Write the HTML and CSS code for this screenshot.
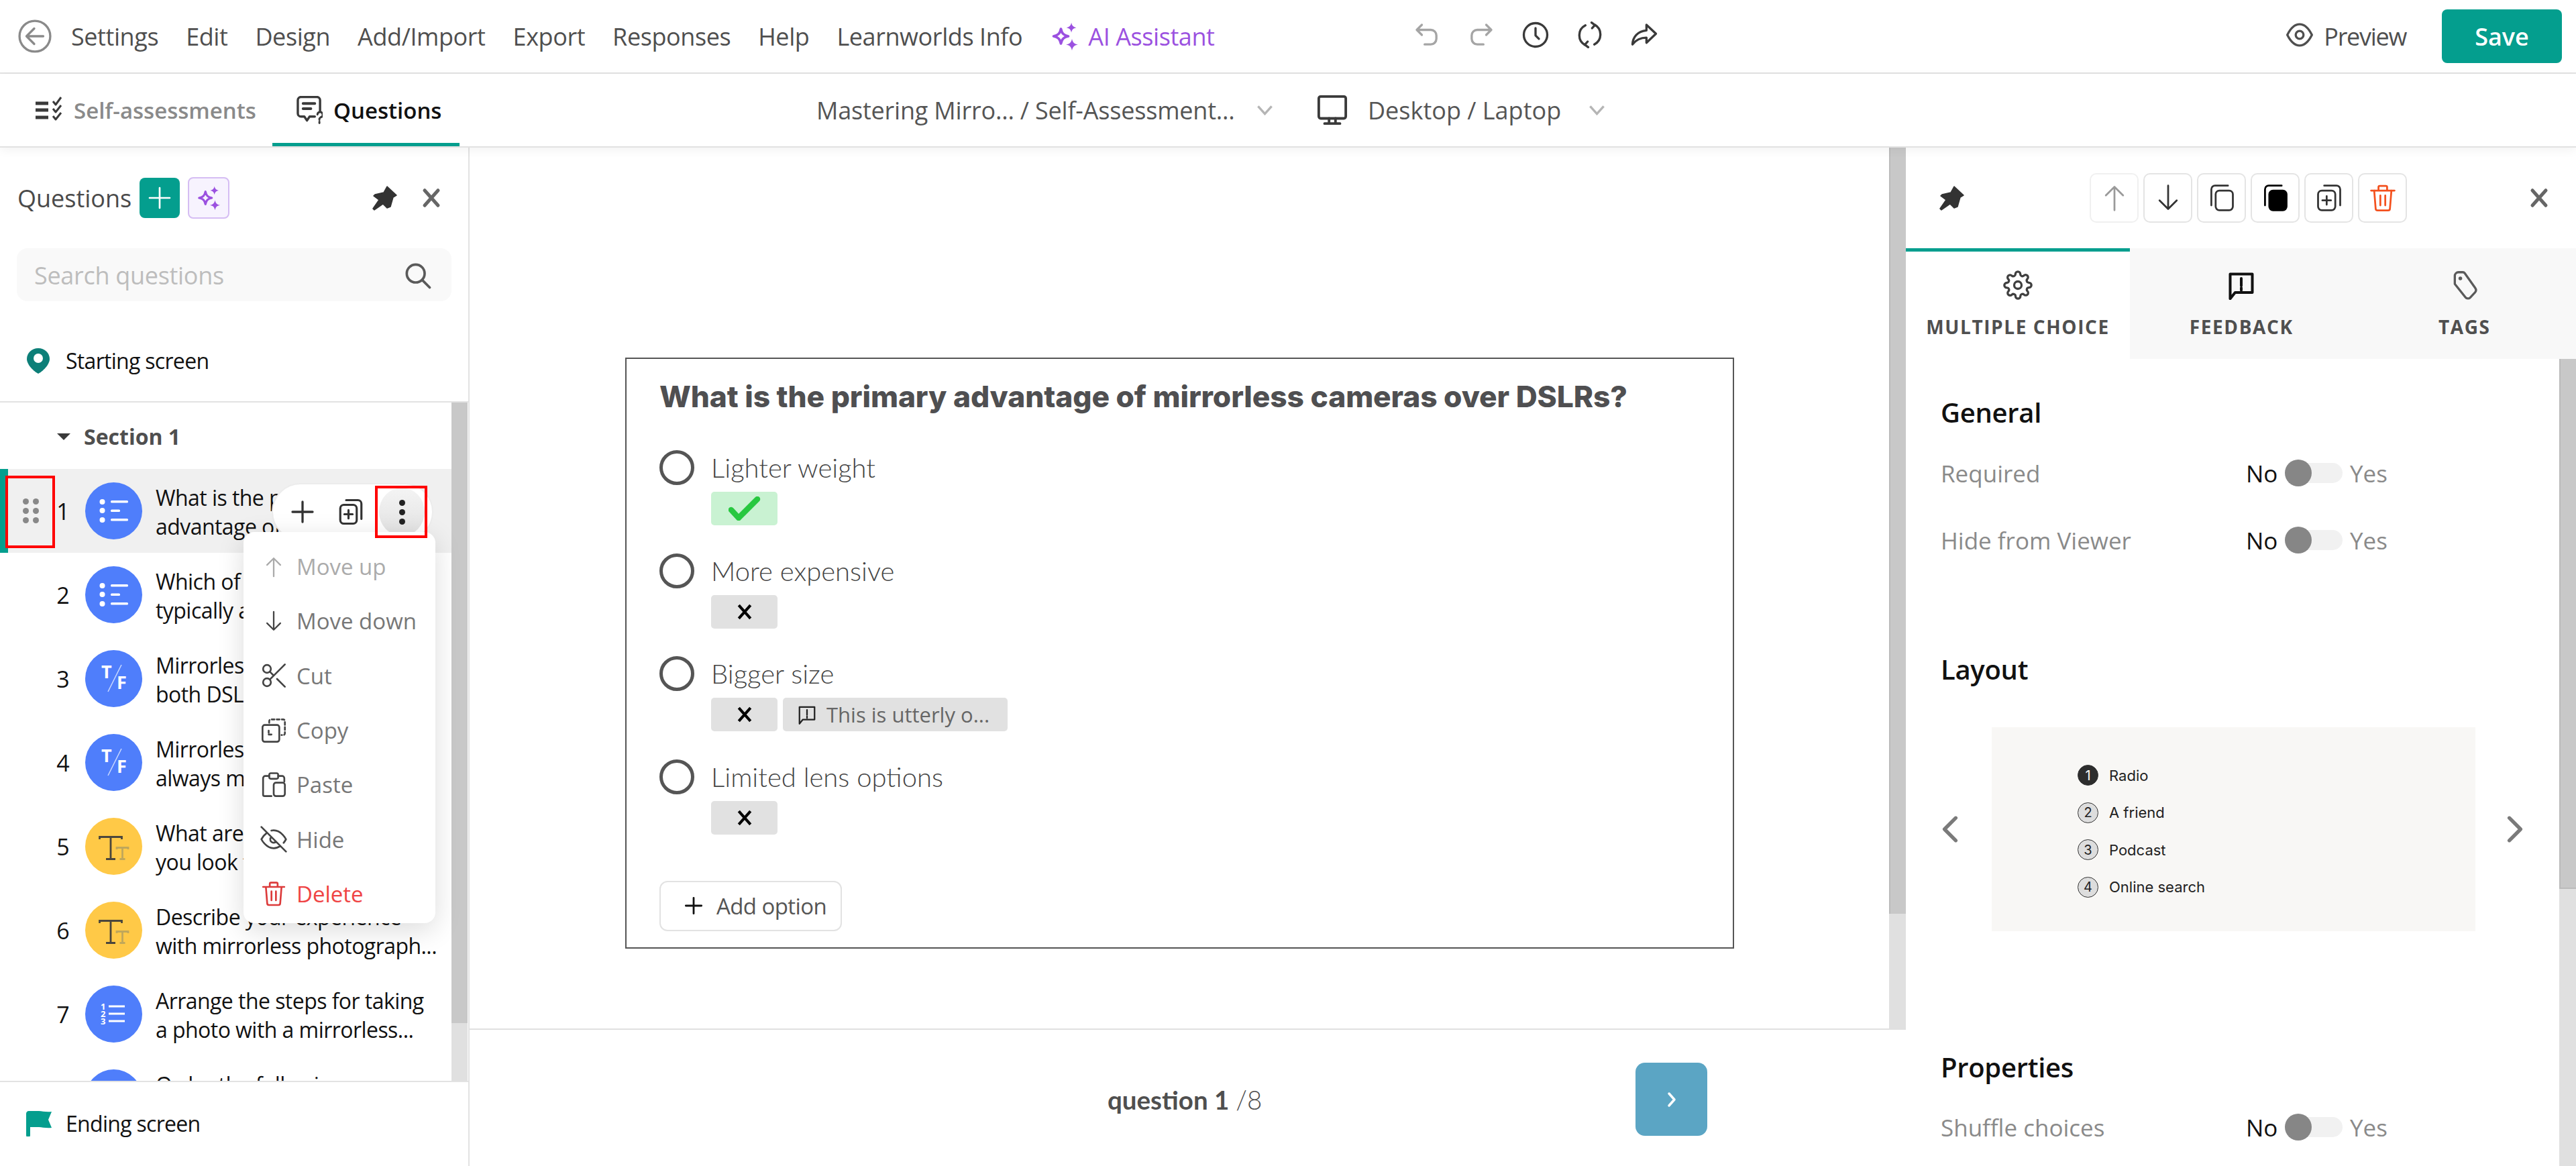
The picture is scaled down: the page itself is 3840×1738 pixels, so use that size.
FILE: index.html
```html
<!DOCTYPE html>
<html lang="en">
<head>
<meta charset="utf-8">
<title>Questions editor</title>
<link rel="stylesheet" href="styles.css">
</head>
<body>
<svg class="sprite" aria-hidden="true">
  <defs>
    <symbol id="i-up" viewBox="0 0 24 24"><path d="M12 22V3M5 10l7-7 7 7"/></symbol>
    <symbol id="i-down" viewBox="0 0 24 24"><path d="M12 2v19M5 14l7 7 7-7"/></symbol>
    <symbol id="i-copy" viewBox="0 0 24 24"><rect x="7" y="6" width="14" height="16" rx="3"/><path d="M3.5 18V5a3 3 0 0 1 3-3H17"/></symbol>
    <symbol id="i-copyfill" viewBox="0 0 24 24"><rect x="7" y="6" width="14" height="16" rx="3" fill="currentColor"/><path d="M3.5 18V5a3 3 0 0 1 3-3H17"/></symbol>
    <symbol id="i-dup" viewBox="0 0 24 24"><rect x="3" y="6" width="14" height="16" rx="3"/><path d="M8 2h10a3 3 0 0 1 3 3v13M10 10.5v7M6.5 14h7"/></symbol>
    <symbol id="i-trash" viewBox="0 0 24 24"><path d="M2.5 6h19M8.5 6V3.2a1 1 0 0 1 1-1h5a1 1 0 0 1 1 1V6M5 6l1.2 14.8a1.5 1.5 0 0 0 1.5 1.4h8.6a1.5 1.5 0 0 0 1.5-1.4L19 6M10 10v8M14 10v8"/></symbol>
    <symbol id="i-pin" viewBox="0 0 38 37"><path fill="currentColor" stroke="currentColor" stroke-width="1.5" stroke-linejoin="round" d="M23 1L37 14L32 17L28 31L23 33L17 27L4 36L2 34L11 21L3 15L5 13L18 10z"/></symbol>
    <symbol id="i-x" viewBox="0 0 24 24"><path d="M4 3l16 18M20 3L4 21"/></symbol>
    <symbol id="i-plus" viewBox="0 0 24 24"><path d="M12 2v20M2 12h20"/></symbol>
    <symbol id="i-spark" viewBox="0 0 24 24"><path d="M9 6c.8 3.8 2.2 5.2 6 6-3.800.8-5.200 2.200-6 6-.8-3.800-2.200-5.200-6-6 3.800-.8 5.200-2.200 6-6z" fill="none"/><path fill="currentColor" stroke="none" d="M17.500 1c.5 2.500 1.500 3.500 4 4-2.500.5-3.500 1.500-4 4-.5-2.500-1.500-3.500-4-4 2.500-.5 3.500-1.500 4-4zM18 14c.6 3 1.800 4.200 4.800 4.800-3 .6-4.200 1.800-4.800 4.800-.6-3-1.800-4.200-4.800-4.800 3-.6 4.200-1.800 4.800-4.800z"/></symbol>
    <symbol id="i-feedback" viewBox="0 0 24 24"><path d="M3 3h18v15H7l-4 5zM12 6.500v6M12 14.200v2"/></symbol>
    <symbol id="i-chev" viewBox="0 0 24 14"><path d="M3 2l9 10 9-10"/></symbol>
    <symbol id="i-check" viewBox="0 0 48 36"><path d="M4 20l11 12L43 4"/></symbol>
    <symbol id="i-cross" viewBox="0 0 22 22"><path d="M3 2l16 18M19 2L3 20"/></symbol>
    <symbol id="i-list" viewBox="0 0 85 85"><g fill="#fff" stroke="none"><circle cx="25.500" cy="29" r="4"/><circle cx="25.500" cy="42" r="4"/><circle cx="25.500" cy="56" r="4"/><rect x="38" y="27" width="26" height="3.500" rx="1.500"/><rect x="38" y="40.500" width="14" height="3.500" rx="1.500"/><rect x="38" y="54" width="26" height="3.500" rx="1.500"/></g></symbol>
    <symbol id="i-tf" viewBox="0 0 85 85"><path d="M54 22L34 62" stroke="#c9d8ff" stroke-width="1.500"/></symbol>
    <symbol id="i-tt" viewBox="0 0 85 85"><path d="M21.500 32v-3.500h33V32M38 28.500v33M31 61.500h14" fill="none" stroke="#4b463c" stroke-width="2.800"/><path d="M47 47v-2.500h17V47M55.500 44.500v17M51.500 61.500h8" fill="none" stroke="#c0a75a" stroke-width="2.800"/></symbol>
    <symbol id="i-order" viewBox="0 0 85 85"><g fill="#fff" stroke="none"><rect x="35" y="29.500" width="24" height="3" /><rect x="35" y="40.500" width="24" height="3"/><rect x="35" y="51.500" width="24" height="3"/></g></symbol>
  </defs>
</svg>

<div class="app">
  <header class="topbar">
    <div class="top-left">
      <svg class="ic back" viewBox="0 0 24 24"><circle cx="12" cy="12" r="11"/><path d="M18 12H6.500M11.500 6.500L6 12l5.500 5.500"/></svg>
      <nav class="nav">
        <span>Settings</span><span>Edit</span><span>Design</span><span>Add/Import</span><span>Export</span><span>Responses</span><span>Help</span><span>Learnworlds Info</span>
        <span class="ai"><svg class="ic ai-ic"><use href="#i-spark"/></svg>AI Assistant</span>
      </nav>
    </div>
    <div class="history">
      <svg class="ic muted" viewBox="0 0 24 24"><path d="M7.500 3L3 7.500 7.500 12M3 7.500h12.500a5 5 0 0 1 5 5v3a5 5 0 0 1-5 5H10"/></svg>
      <svg class="ic muted" viewBox="0 0 24 24"><path d="M16.500 3L21 7.500 16.500 12M21 7.500H8.500a5 5 0 0 0-5 5v3a5 5 0 0 0 5 5H14"/></svg>
      <svg class="ic" viewBox="0 0 24 24"><circle cx="12" cy="12" r="10.500"/><path d="M12 6v6.500l3 3"/></svg>
      <svg class="ic" viewBox="0 0 24 24"><path d="M8 3.500A10 10 0 0 0 7.500 21M16 20.500A10 10 0 0 0 16.500 3M13.500 1l3 2.200L14 6M10.500 23l-3-2.200L10 18"/></svg>
      <svg class="ic" viewBox="0 0 24 24"><path d="M14 3l8.500 8-8.500 8v-4.500c-5 0-9 1.500-12.500 6 .3-6.500 4.500-11.800 12.500-12.500z"/></svg>
    </div>
    <div class="top-right">
      <span class="preview"><svg class="ic eye" viewBox="0 0 24 24"><path d="M1 12C4 6 8 2.500 12 2.500S20 6 23 12c-3 6-7 9.500-11 9.500S4 18 1 12z"/><circle cx="12" cy="12" r="3.500"/></svg>Preview</span>
      <button class="save">Save</button>
    </div>
  </header>

  <div class="subbar">
    <div class="tabs">
      <div class="tab tab-a">
        <svg class="ic t-ic" viewBox="0 0 42 42"><path stroke-width="5" d="M1 11h19M1 21h19M1 32h19"/><path stroke-width="3" d="M27 8l4 5 8-11M27 19l4 5 8-10M27 30l4 5 8-10"/></svg>
        <span>Self-assessments</span>
      </div>
      <div class="tab tab-b">
        <svg class="ic t-ic2" viewBox="0 0 40 42"><path stroke-width="3.500" d="M28 31H20l-4 6-4-6H7a5 5 0 0 1-5-5V6a5 5 0 0 1 5-5h24a5 5 0 0 1 5 5v17"/><path stroke-width="4" d="M10 11h18M10 19h12"/><path stroke-width="3" d="M32 28a4 4 0 1 1 5 4l-2 2v2M35 39v2"/></svg>
        <span>Questions</span>
      </div>
    </div>
    <div class="crumbs">
      <span class="crumb">Mastering Mirro... / Self-Assessment...</span>
      <svg class="chev"><use href="#i-chev"/></svg>
      <svg class="ic monitor" viewBox="0 0 24 24"><rect x="1.500" y="1.500" width="21" height="17" rx="1.500"/><path d="M9.500 18.500v4M14.500 18.500v4M6 22.500h12"/></svg>
      <span class="device">Desktop / Laptop</span>
      <svg class="chev"><use href="#i-chev"/></svg>
    </div>
  </div>

  <div class="workspace">
    <aside class="left">
      <div class="left-head">
        <h2 class="q-title">Questions</h2>
        <button class="add"><svg class="ic"><use href="#i-plus"/></svg></button>
        <button class="ai-btn"><svg class="ic"><use href="#i-spark"/></svg></button>
        <svg class="pin-l"><use href="#i-pin"/></svg>
        <svg class="ic close-l"><use href="#i-x"/></svg>
      </div>
      <div class="search">
        <span>Search questions</span>
        <svg class="ic" viewBox="0 0 24 24"><circle cx="10" cy="10" r="8"/><path d="M16 16l6.500 6.500"/></svg>
      </div>
      <div class="screen-row start">
        <svg class="marker" viewBox="0 0 34 38"><path fill="#0d7f78" d="M17 0C7.500 0 0 7 0 16c0 9 11 19 17 22 6-3 17-13 17-22C34 7 26.500 0 17 0z"/><circle cx="17" cy="15" r="7" fill="#fff"/></svg>
        <span>Starting screen</span>
      </div>
      <div class="list-wrap">
        <div class="list">
          <div class="section"><i class="tri"></i><span>Section 1</span></div>

          <div class="row active">
            <span class="drag"><i></i><i></i><i></i><i></i><i></i><i></i></span>
            <span class="num">1</span>
            <svg class="qic blue"><use href="#i-list"/></svg>
            <p>What is the primary<br>advantage of mirrorless...</p>
          </div>
          <div class="row">
            <span class="num">2</span>
            <svg class="qic blue"><use href="#i-list"/></svg>
            <p>Which of the following is<br>typically a feature of...</p>
          </div>
          <div class="row">
            <span class="num">3</span>
            <svg class="qic blue" viewBox="0 0 85 85"><use href="#i-tf"/><text class="tf" x="24" y="42">T</text><text class="tf" x="47" y="58">F</text></svg>
            <p>Mirrorless cameras use<br>both DSLR lenses...</p>
          </div>
          <div class="row">
            <span class="num">4</span>
            <svg class="qic blue" viewBox="0 0 85 85"><use href="#i-tf"/><text class="tf" x="24" y="42">T</text><text class="tf" x="47" y="58">F</text></svg>
            <p>Mirrorless cameras are<br>always more compact...</p>
          </div>
          <div class="row">
            <span class="num">5</span>
            <svg class="qic yellow"><use href="#i-tt"/></svg>
            <p>What are the features<br>you look for in a mirrorless...</p>
          </div>
          <div class="row">
            <span class="num">6</span>
            <svg class="qic yellow"><use href="#i-tt"/></svg>
            <p>Describe your experience<br>with mirrorless photograph...</p>
          </div>
          <div class="row">
            <span class="num">7</span>
            <svg class="qic blue" viewBox="0 0 85 85"><use href="#i-order"/><text class="ord" x="23" y="36">1</text><text class="ord" x="23" y="47">2</text><text class="ord" x="23" y="58">3</text></svg>
            <p>Arrange the steps for taking<br>a photo with a mirrorless...</p>
          </div>
          <div class="row">
            <span class="num">8</span>
            <svg class="qic blue" viewBox="0 0 85 85"><use href="#i-order"/></svg>
            <p>Order the following...<br>&nbsp;</p>
          </div>
        </div>
        <div class="sbar"><i class="sthumb"></i></div>
      </div>
      <div class="screen-row end">
        <svg class="flag" viewBox="0 0 38 38"><path fill="#049e8e" d="M0 4c0-2 1.500-4 4-4h15c5 0 10 2 19 1l-5 12 5 12c-9 1-14-1-19-1H6v12a3 3 0 0 1-6 0z"/></svg>
        <span>Ending screen</span>
      </div>

      <span class="redbox rb-a"></span>

      <div class="pill">
        <svg class="ic p-plus"><use href="#i-plus"/></svg>
        <svg class="ic p-dup"><use href="#i-dup"/></svg>
        <span class="kebab"><i></i><i></i><i></i></span>
      </div>
      <span class="redbox rb-b"></span>

      <ul class="menu">
        <li class="off"><svg class="ic"><use href="#i-up"/></svg>Move up</li>
        <li><svg class="ic"><use href="#i-down"/></svg>Move down</li>
        <li><svg class="ic" viewBox="0 0 24 24"><circle cx="6" cy="6" r="3.500"/><circle cx="6" cy="18" r="3.500"/><path d="M22 2L8.500 15.500M15 15l7 7M8.500 8.500L12 12"/></svg>Cut</li>
        <li><svg class="ic" viewBox="0 0 24 24"><rect x="2" y="7" width="15" height="15" rx="2"/><path stroke-dasharray="2.500 2" d="M8 5V3.500A1.500 1.500 0 0 1 9.500 2h11A1.500 1.500 0 0 1 22 3.500v11a1.500 1.500 0 0 1-1.500 1.500H19M7.500 12v2M7.500 15.500h2.500"/></svg>Copy</li>
        <li><svg class="ic" viewBox="0 0 24 24"><path d="M8 4H4.500a2 2 0 0 0-2 2v14.500a1.500 1.500 0 0 0 1.500 1.500h6M16 4h3.500a2 2 0 0 1 2 2v3"/><rect x="8" y="1.500" width="8" height="5" rx="1.500"/><rect x="12" y="10" width="10" height="12" rx="2"/></svg>Paste</li>
        <li><svg class="ic" viewBox="0 0 24 24"><path d="M17.940 17.940A10.070 10.070 0 0 1 12 20c-7 0-11-8-11-8a18.450 18.450 0 0 1 5.060-5.940M9.900 4.240A9.120 9.120 0 0 1 12 4c7 0 11 8 11 8a18.500 18.500 0 0 1-2.160 3.190m-6.720-1.070a3 3 0 1 1-4.240-4.240M1 1l22 22"/></svg>Hide</li>
        <li class="danger"><svg class="ic"><use href="#i-trash"/></svg>Delete</li>
      </ul>
    </aside>

    <main class="center">
      <div class="center-col">
        <div class="stage">
          <section class="card">
            <h1 class="title">What is the primary advantage of mirrorless cameras over DSLRs?</h1>
            <div class="options">
              <div class="option">
                <div class="opt-head"><i class="radio"></i><span>Lighter weight</span></div>
                <div class="tags"><span class="tag ok"><svg class="check"><use href="#i-check"/></svg></span></div>
              </div>
              <div class="option">
                <div class="opt-head"><i class="radio"></i><span>More expensive</span></div>
                <div class="tags"><span class="tag"><svg class="cross"><use href="#i-cross"/></svg></span></div>
              </div>
              <div class="option">
                <div class="opt-head"><i class="radio"></i><span>Bigger size</span></div>
                <div class="tags">
                  <span class="tag"><svg class="cross"><use href="#i-cross"/></svg></span>
                  <span class="tag fb"><svg class="ic"><use href="#i-feedback"/></svg>This is utterly o...</span>
                </div>
              </div>
              <div class="option">
                <div class="opt-head"><i class="radio"></i><span>Limited lens options</span></div>
                <div class="tags"><span class="tag"><svg class="cross"><use href="#i-cross"/></svg></span></div>
              </div>
            </div>
            <button class="add-opt"><svg class="ic"><use href="#i-plus"/></svg>Add option</button>
          </section>
        </div>
        <div class="pager">
          <span class="count"><b>question 1</b> <span>/8</span></span>
          <button class="next"><svg class="ic" viewBox="0 0 24 24"><path d="M8 3l8 9-8 9"/></svg></button>
        </div>
      </div>
      <div class="cbar"><i class="cthumb"></i></div>
    </main>

    <aside class="right">
      <div class="r-head">
        <svg class="pin-r"><use href="#i-pin"/></svg>
        <div class="actions">
          <button class="act off"><svg class="ic"><use href="#i-up"/></svg></button>
          <button class="act"><svg class="ic"><use href="#i-down"/></svg></button>
          <button class="act"><svg class="ic"><use href="#i-copy"/></svg></button>
          <button class="act blk"><svg class="ic"><use href="#i-copyfill"/></svg></button>
          <button class="act"><svg class="ic"><use href="#i-dup"/></svg></button>
          <button class="act del"><svg class="ic"><use href="#i-trash"/></svg></button>
        </div>
        <svg class="ic close-r"><use href="#i-x"/></svg>
      </div>
      <div class="r-tabs">
        <div class="r-tab on">
          <svg class="ic" viewBox="0 0 24 24"><circle cx="12" cy="12" r="3"/><path d="M19.400 15a1.650 1.650 0 0 0 .33 1.820l.06.06a2 2 0 0 1 0 2.830 2 2 0 0 1-2.830 0l-.06-.06a1.650 1.650 0 0 0-1.820-.33 1.650 1.650 0 0 0-1 1.510V21a2 2 0 0 1-2 2 2 2 0 0 1-2-2v-.09A1.650 1.650 0 0 0 9 19.400a1.650 1.650 0 0 0-1.820.33l-.06.06a2 2 0 0 1-2.830 0 2 2 0 0 1 0-2.830l.06-.06a1.650 1.650 0 0 0 .33-1.820 1.650 1.650 0 0 0-1.510-1H3a2 2 0 0 1-2-2 2 2 0 0 1 2-2h.09A1.650 1.650 0 0 0 4.600 9a1.650 1.650 0 0 0-.33-1.820l-.06-.06a2 2 0 0 1 0-2.830 2 2 0 0 1 2.830 0l.06.06a1.650 1.650 0 0 0 1.820.33H9a1.650 1.650 0 0 0 1-1.510V3a2 2 0 0 1 2-2 2 2 0 0 1 2 2v.09a1.650 1.650 0 0 0 1 1.510 1.650 1.650 0 0 0 1.820-.33l.06-.06a2 2 0 0 1 2.830 0 2 2 0 0 1 0 2.830l-.06.06a1.650 1.650 0 0 0-.33 1.820V9a1.650 1.650 0 0 0 1.510 1H21a2 2 0 0 1 2 2 2 2 0 0 1-2 2h-.09a1.650 1.650 0 0 0-1.510 1z"/></svg>
          <span>MULTIPLE CHOICE</span>
        </div>
        <div class="r-tab">
          <svg class="ic fb-ic"><use href="#i-feedback"/></svg>
          <span>FEEDBACK</span>
        </div>
        <div class="r-tab">
          <svg class="ic" viewBox="0 0 24 24"><path d="M7 1.500h3.500a2 2 0 0 1 1.600.8l8.500 12a3 3 0 0 1-.3 3.800l-3.800 4a2.500 2.500 0 0 1-3.800-.2L4 11V4.500a3 3 0 0 1 3-3z"/><circle cx="8.500" cy="6.500" r="1.500" fill="currentColor" stroke="none"/></svg>
          <span>TAGS</span>
        </div>
      </div>
      <div class="r-body">
        <div class="r-scroll">
          <h3 class="h-general">General</h3>
          <div class="prop p-req"><label>Required</label><span class="no">No</span><span class="toggle"><i></i></span><span class="yes">Yes</span></div>
          <div class="prop p-hide"><label>Hide from Viewer</label><span class="no">No</span><span class="toggle"><i></i></span><span class="yes">Yes</span></div>
          <h3 class="h-layout">Layout</h3>
          <div class="carousel">
            <svg class="ic car-l" viewBox="0 0 20 30"><path d="M16 3L4 15l12 12"/></svg>
            <div class="layout-prev">
              <div class="lp-item"><i class="lp-n dark">1</i>Radio</div>
              <div class="lp-item"><i class="lp-n">2</i>A friend</div>
              <div class="lp-item"><i class="lp-n">3</i>Podcast</div>
              <div class="lp-item"><i class="lp-n">4</i>Online search</div>
            </div>
            <svg class="ic car-r" viewBox="0 0 20 30"><path d="M4 3l12 12L4 27"/></svg>
          </div>
          <h3 class="h-props">Properties</h3>
          <div class="prop p-shuffle"><label>Shuffle choices</label><span class="no">No</span><span class="toggle"><i></i></span><span class="yes">Yes</span></div>
        </div>
        <div class="rbar"><i class="rthumb"></i></div>
      </div>
    </aside>
  </div>
</div>
</body>
</html>
```

FILE: styles.css
```css
* { box-sizing: border-box; }
html, body { margin: 0; padding: 0; }
body {
  width: 3840px; height: 1738px; overflow: hidden; background: #fff; color: #4f4f4f;
  font-family: "Open Sans", "Noto Sans", sans-serif; font-stretch: 90%; font-size: 36px;
}
.sprite { position: absolute; width: 0; height: 0; }
.ic { fill: none; stroke: currentColor; stroke-width: 2; stroke-linecap: round; stroke-linejoin: round; flex: none; }
button { border: 0; background: none; padding: 0; font: inherit; color: inherit; }
h1, h2, h3, p, ul { margin: 0; padding: 0; }
.app { display: flex; flex-direction: column; height: 1738px; }

/* top bar */
.topbar { height: 110px; flex: none; border-bottom: 2px solid #e2e2e2; display: flex; align-items: center; padding: 0 21px 0 27px; }
.top-left { width: 2080px; flex: none; display: flex; align-items: center; }
.back { width: 50px; height: 50px; color: #8a8a8a; margin-right: 29px; stroke-width: 1.600; }
.nav { display: flex; gap: 41px; align-items: center; white-space: nowrap; letter-spacing: -.42px; }
.ai { color: #9b51e0; display: flex; align-items: center; }
.ai-ic { width: 44px; height: 48px; margin-right: 13px; }
.history { display: flex; gap: 41px; color: #3a3a3a; margin-top: -4px; }
.history .ic { width: 40px; height: 40px; }
.history .muted { color: #a5a5a5; }
.top-right { margin-left: auto; display: flex; align-items: center; }
.preview { display: flex; align-items: center; margin-right: 53px; letter-spacing: -1.3px; }
.eye { width: 40px; height: 40px; margin-right: 16px; margin-top: -4px; }
.save { width: 179px; height: 80px; border-radius: 8px; background: #049e8e; color: #fff; font-weight: 600; }

/* sub bar */
.subbar { height: 110px; flex: none; border-bottom: 2px solid #e2e2e2; display: flex; align-items: stretch; position: relative; z-index: 3; box-shadow: 0 4px 14px rgba(0,0,0,.05); background: #fff; }
.tabs { width: 1217px; flex: none; display: flex; }
.tab { display: flex; align-items: center; height: 108px; font-weight: 600; font-size: 33px; white-space: nowrap; }
.tab-a { width: 406px; padding-left: 52px; color: #8a8a8a; }
.t-ic { width: 42px; height: 42px; color: #3a3a3a; margin-right: 16px; stroke-linecap: butt; }
.tab-b { width: 279px; padding-left: 36px; color: #111; border-bottom: 5px solid #049e8e; padding-top: 5px; }
.t-ic2 { width: 39px; height: 42px; color: #3a3a3a; margin-right: 16px; }
.crumbs { display: flex; align-items: center; color: #555; }
.crumb { width: 655px; white-space: nowrap; letter-spacing: -.2px; }
.device { width: 328px; white-space: nowrap; }
.chev { width: 27px; height: 16px; fill: none; stroke: #b5b5b5; stroke-width: 3; flex: none; }
.monitor { width: 46px; height: 46px; color: #3a3a3a; margin: 0 30px 0 64px; }

/* workspace */
.workspace { flex: 1; min-height: 0; display: flex; }

/* left */
.left { width: 700px; flex: none; border-right: 2px solid #e2e2e2; display: flex; flex-direction: column; position: relative; }
.left-head { display: flex; align-items: center; height: 62px; margin-top: 44px; padding-left: 26px; flex: none; }
.q-title { font-size: 36px; font-weight: 400; color: #4a4a4a; width: 182px; white-space: nowrap; }
.add { width: 60px; height: 60px; border-radius: 8px; background: #049e8e; color: #fff; display: flex; align-items: center; justify-content: center; }
.add .ic { width: 36px; height: 36px; stroke-width: 1.800; }
.ai-btn { width: 62px; height: 62px; margin-left: 12px; border-radius: 8px; background: #f7f3fe; border: 2px solid #d5bdf3; color: #9b51e0; display: flex; align-items: center; justify-content: center; }
.ai-btn .ic { width: 38px; height: 38px; }
.pin-l { width: 38px; height: 37px; color: #333; margin-left: 212px; flex: none; }
.close-l { width: 30px; height: 30px; margin-left: 36px; color: #666; stroke-width: 4; }
.search { flex: none; margin: 44px 0 0 25px; width: 648px; height: 79px; border-radius: 16px; background: #f9f9f9; display: flex; align-items: center; justify-content: space-between; padding: 2px 30px 0 26px; color: #bdbdbd; letter-spacing: -.3px; }
.search .ic { width: 40px; height: 40px; color: #5a5a5a; stroke-width: 2.200; }
.screen-row { display: flex; align-items: center; color: #111; font-size: 32px; letter-spacing: -.7px; flex: none; }
.start { height: 151px; padding: 28px 0 0 40px; border-bottom: 2px solid #e2e2e2; }
.marker { width: 34px; height: 38px; margin-right: 24px; }
.list-wrap { flex: 1; min-height: 0; display: flex; border-bottom: 2px solid #e2e2e2; padding-right: 2px; }
.list { width: 673px; flex: none; overflow: hidden; }
.section { height: 99px; display: flex; align-items: center; padding: 2px 0 0 85px; font-weight: 700; font-size: 32px; color: #4f4f4f; }
.tri { width: 0; height: 0; border-left: 10px solid transparent; border-right: 10px solid transparent; border-top: 10px solid #3a3a3a; margin-right: 20px; }
.row { height: 125px; display: flex; align-items: center; padding-left: 74px; position: relative; color: #111; font-size: 32px; }
.row.active { background: #f0f0f0; box-shadow: inset 12px 0 0 #049e8e; }
.num { width: 40px; text-align: center; font-size: 34px; flex: none; margin-right: 13px; }
.qic { width: 85px; height: 85px; border-radius: 50%; flex: none; margin-right: 20px; }
.blue { background: #4f7efb; }
.yellow { background: #ffc947; }
.row p { line-height: 43px; white-space: nowrap; letter-spacing: -.55px; padding-top: 2px; }
.tf { font: 700 27px "Open Sans", sans-serif; fill: #fff; stroke: none; }
.ord { font: 700 13px "Open Sans", sans-serif; fill: #fff; stroke: none; }
.drag { position: absolute; left: 34px; top: 44px; display: grid; grid-template-columns: 9px 9px; gap: 5px 6px; }
.drag i { width: 9px; height: 9px; border-radius: 50%; background: #888; }
.sbar { width: 24px; flex: none; background: #e0e0e0; }
.sthumb { display: block; height: 925px; background: #c8c8c8; }
.end { height: 125px; padding: 0 0 2px 39px; }
.flag { width: 38px; height: 38px; margin-right: 21px; }
.redbox { position: absolute; border: 4px solid #f00; z-index: 8; }
.rb-a { left: 8px; top: 489px; width: 74px; height: 108px; }
.rb-b { left: 559px; top: 504px; width: 78px; height: 78px; }
.pill { position: absolute; left: 405px; top: 500px; width: 241px; height: 86px; background: #fff; border: 2px solid #ececec; border-radius: 43px; display: flex; align-items: center; z-index: 5; color: #333; }
.p-plus { width: 36px; height: 36px; margin-left: 26px; stroke-width: 2.200; }
.p-dup { width: 42px; height: 42px; margin-left: 33px; stroke-width: 1.800; }
.kebab { width: 68px; height: 72px; margin-left: 21px; border-radius: 50%; background: linear-gradient(#f4f4f4, #e2e2e2); display: flex; flex-direction: column; align-items: center; justify-content: center; gap: 5px; }
.kebab i { width: 9px; height: 9px; border-radius: 50%; background: #222; }
.menu { position: absolute; left: 363px; top: 573px; width: 286px; height: 583px; background: #fff; border-radius: 16px; box-shadow: 0 10px 40px rgba(0,0,0,.14); list-style: none; padding: 11px 0 0 24px; z-index: 6; color: #777; font-size: 33px; }
.menu li { height: 81.300px; display: flex; align-items: center; white-space: nowrap; }
.menu .ic { width: 42px; height: 40px; margin-right: 13px; color: #444; stroke-width: 1.600; }
.menu li:nth-child(-n+2) .ic { width: 34px; height: 34px; margin: 0 17px 0 4px; }
.menu .off { color: #ababab; }
.menu .off .ic { color: #aaa; }
.menu .danger { color: #ef4444; }
.menu .danger .ic { color: #dc3b3b; }

/* center */
.center { flex: 1; min-width: 0; display: flex; }
.center-col { flex: 1; min-width: 0; display: flex; flex-direction: column; }
.stage { height: 1313px; flex: none; padding: 313px 0 0 232px; }
.card { width: 1653px; height: 881px; border: 2px solid #555; padding: 27px 0 0 50px; }
.title { font-family: Inter, sans-serif; font-stretch: normal; font-weight: 800; font-size: 44.300px; line-height: 58px; color: #4f4f51; white-space: nowrap; margin-left: -1px; letter-spacing: -.1px; }
.options { display: flex; flex-direction: column; gap: 41.500px; margin-top: 51px; }
.opt-head { display: flex; align-items: center; height: 52px; font-family: Lato, sans-serif; font-stretch: normal; font-weight: 300; font-size: 40px; color: #444; }
.radio { width: 52px; height: 52px; border-radius: 50%; border: 5px solid #555; margin-right: 25px; flex: none; margin-left: -1px; }
.tags { display: flex; gap: 8px; margin: 10px 0 0 76px; }
.tag { width: 99px; height: 50px; border-radius: 5px; background: #e1e1e1; display: flex; align-items: center; justify-content: center; }
.tag.ok { background: #c9f2d2; }
.check { width: 48px; height: 36px; fill: none; stroke: #28c840; stroke-width: 8.500; stroke-linecap: round; stroke-linejoin: round; }
.cross { width: 24px; height: 24px; fill: none; stroke: #000; stroke-width: 3.800; }
.fb { width: 335px; justify-content: flex-start; padding-left: 21px; font-size: 31px; color: #666; white-space: nowrap; }
.fb .ic { width: 30px; height: 34px; margin-right: 14px; color: #222; stroke-width: 1.800; }
.add-opt { display: flex; align-items: center; width: 272px; height: 75px; margin-top: 69px; margin-left: -1px; border: 2px solid #e2e2e2; border-radius: 12px; background: #fff; padding-left: 35px; color: #555; font-size: 33px; letter-spacing: -.6px; white-space: nowrap; }
.add-opt .ic { width: 28px; height: 28px; margin-right: 20px; color: #111; stroke-width: 2.400; }
.pager { flex: 1; border-top: 2px solid #e0e0e0; display: flex; align-items: center; padding: 4px 0 0 951px; margin-right: -25px; position: relative; z-index: 1; background: #fff; }
.count { font-family: Lato, sans-serif; font-stretch: normal; font-size: 38.500px; color: #4f4f4f; width: 787px; white-space: nowrap; }
.count span { font-weight: 300; }
.next { width: 107px; height: 109px; border-radius: 14px; background: #5ba5c4; color: #fff; display: flex; align-items: center; justify-content: center; }
.next .ic { width: 24px; height: 26px; stroke-width: 3.500; }
.cbar { width: 25px; height: 1315px; flex: none; background: #e0e0e0; }
.cthumb { display: block; height: 1142px; background: #c8c8c8; border-left: 2px solid #bbb; }

/* right */
.right { width: 999px; flex: none; display: flex; flex-direction: column; background: #fff; position: relative; z-index: 2; }
.r-head { height: 150px; flex: none; display: flex; align-items: center; padding-left: 49px; }
.pin-r { width: 38px; height: 37px; color: #333; flex: none; }
.actions { display: flex; gap: 7px; margin-left: 187px; }
.act { width: 73px; height: 74px; border: 2px solid #e4e4e4; border-radius: 10px; color: #333; display: flex; align-items: center; justify-content: center; }
.act .ic { width: 44px; height: 44px; stroke-width: 1.500; }
.act.off { border-color: #f0f0f0; color: #9a9a9a; }
.act.blk { color: #000; }
.act.del { color: #f4511e; }
.close-r { width: 30px; height: 30px; margin-left: 182px; color: #666; stroke-width: 4; }
.r-tabs { height: 165px; flex: none; display: flex; background: #f8f8f8; }
.r-tab { width: 332.500px; display: flex; flex-direction: column; align-items: center; color: #4f4f4f; font-size: 28px; font-weight: 700; letter-spacing: 1.600px; padding-top: 33px; }
.r-tab.on { width: 334px; background: #fff; border-top: 5px solid #049e8e; padding-top: 28px; }
.r-tab .ic { width: 44px; height: 44px; margin-bottom: 21px; stroke-width: 1.800; color: #3f3f3f; }
.r-tab .fb-ic { color: #111; stroke-width: 2.200; }
.r-tab:nth-child(3) .ic { color: #5a5a5a; }
.r-body { flex: 1; min-height: 0; display: flex; }
.r-scroll { width: 974px; flex: none; padding-left: 52px; overflow: hidden; }
.r-scroll h3 { font-size: 40px; font-weight: 600; color: #111; line-height: 50px; letter-spacing: -.3px; }
.h-general { margin-top: 55px; }
.h-layout { margin-top: 143px; }
.h-props { margin-top: 178px; }
.prop { height: 50px; display: flex; align-items: center; white-space: nowrap; color: #111; font-size: 35px; }
.prop label { width: 455px; color: #8a8a8a; flex: none; }
.p-req { margin-top: 40px; }
.p-hide { margin-top: 50px; }
.p-shuffle { margin-top: 39px; }
.no { width: 58px; flex: none; }
.yes { color: #8a8a8a; margin-left: 11px; }
.toggle { width: 86px; height: 30px; background: #f1f1f1; border-radius: 15px; position: relative; flex: none; }
.toggle i { position: absolute; left: 0; top: -5px; width: 40px; height: 40px; border-radius: 50%; background: #868686; }
.carousel { display: flex; align-items: center; margin-top: 61px; color: #7a7a7a; }
.car-l, .car-r { width: 28px; height: 42px; stroke-width: 3.800; }
.car-l { margin-left: 0; margin-right: 48px; }
.car-r { margin-left: 45px; }
.layout-prev { width: 721px; height: 304px; background: #f8f7f5; padding: 56px 0 0 128px; color: #222; font-size: 22px; font-family: Inter, sans-serif; font-stretch: normal; }
.lp-item { display: flex; align-items: center; height: 31px; margin-bottom: 24.500px; }
.lp-n { width: 31px; height: 31px; border-radius: 50%; border: 1px solid #333; background: #ddd; display: flex; align-items: center; justify-content: center; font-style: normal; font-size: 20px; margin-right: 16px; }
.lp-n.dark { background: #2d2d2d; color: #fff; }
.rbar { width: 25px; flex: none; background: #e0e0e0; }
.rthumb { display: block; height: 790px; background: #c8c8c8; border-left: 2px solid #bbb; border-bottom: 2px solid #bbb; }
```
